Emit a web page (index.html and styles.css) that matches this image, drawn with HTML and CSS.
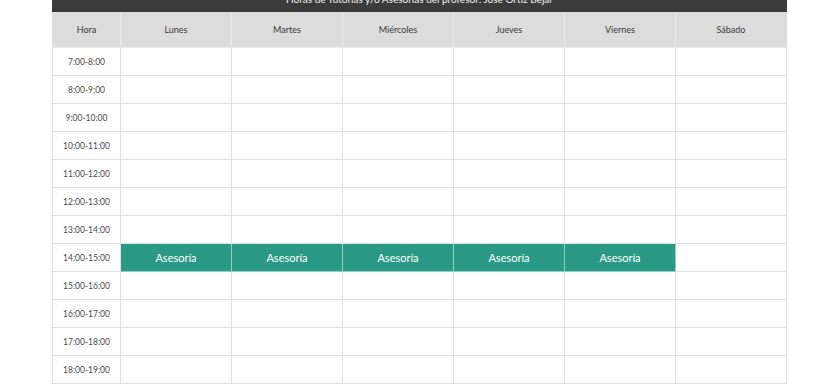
FILE: index.html
```html
<!DOCTYPE html>
<html lang="es">
<head>
<meta charset="utf-8">
<title>Horario</title>
<link rel="stylesheet" href="styles.css">
</head>
<body>
<div class="schedule">
  <div class="title">Horas de Tutorías y/o Asesorías del profesor: José Ortiz Bejar</div>
  <div class="grid">
    <div class="cell head">Hora</div>
    <div class="cell head">Lunes</div>
    <div class="cell head">Martes</div>
    <div class="cell head">Miércoles</div>
    <div class="cell head">Jueves</div>
    <div class="cell head">Viernes</div>
    <div class="cell head">Sábado</div>

    <div class="cell time">7:00-8:00</div><div class="cell"></div><div class="cell"></div><div class="cell"></div><div class="cell"></div><div class="cell"></div><div class="cell"></div>
    <div class="cell time">8:00-9:00</div><div class="cell"></div><div class="cell"></div><div class="cell"></div><div class="cell"></div><div class="cell"></div><div class="cell"></div>
    <div class="cell time">9:00-10:00</div><div class="cell"></div><div class="cell"></div><div class="cell"></div><div class="cell"></div><div class="cell"></div><div class="cell"></div>
    <div class="cell time">10:00-11:00</div><div class="cell"></div><div class="cell"></div><div class="cell"></div><div class="cell"></div><div class="cell"></div><div class="cell"></div>
    <div class="cell time">11:00-12:00</div><div class="cell"></div><div class="cell"></div><div class="cell"></div><div class="cell"></div><div class="cell"></div><div class="cell"></div>
    <div class="cell time">12:00-13:00</div><div class="cell"></div><div class="cell"></div><div class="cell"></div><div class="cell"></div><div class="cell"></div><div class="cell"></div>
    <div class="cell time">13:00-14:00</div><div class="cell"></div><div class="cell"></div><div class="cell"></div><div class="cell"></div><div class="cell"></div><div class="cell"></div>
    <div class="cell time">14:00-15:00</div><div class="cell busy">Asesoría</div><div class="cell busy">Asesoría</div><div class="cell busy">Asesoría</div><div class="cell busy">Asesoría</div><div class="cell busy">Asesoría</div><div class="cell"></div>
    <div class="cell time">15:00-16:00</div><div class="cell"></div><div class="cell"></div><div class="cell"></div><div class="cell"></div><div class="cell"></div><div class="cell"></div>
    <div class="cell time">16:00-17:00</div><div class="cell"></div><div class="cell"></div><div class="cell"></div><div class="cell"></div><div class="cell"></div><div class="cell"></div>
    <div class="cell time">17:00-18:00</div><div class="cell"></div><div class="cell"></div><div class="cell"></div><div class="cell"></div><div class="cell"></div><div class="cell"></div>
    <div class="cell time">18:00-19:00</div><div class="cell"></div><div class="cell"></div><div class="cell"></div><div class="cell"></div><div class="cell"></div><div class="cell"></div>
  </div>
</div>
</body>
</html>
```
FILE: styles.css
```css
html, body {
  margin: 0;
  padding: 0;
  background: #ffffff;
}
body {
  font-family: Lato, "Noto Sans", sans-serif;
  overflow: hidden;
  height: 385px;
}
.schedule {
  width: 735px;
  margin-left: 52px;
}
.title {
  background: #3b3b3b;
  color: #f2f2f2;
  font-size: 10px;
  line-height: 14px;
  margin-top: -14px;
  padding-top: 6px;
  text-align: center;
  box-sizing: border-box;
  height: 26px;
}
.grid {
  display: grid;
  grid-template-columns: 68px repeat(5, 111px) 1fr;
  grid-template-rows: 36px;
  grid-auto-rows: 28px;
  border-left: 1px solid #e0e0e0;
  border-right: 1px solid #e0e0e0;
}
.cell {
  border-right: 1px solid #e0e0e0;
  border-bottom: 1px solid #e0e0e0;
  display: flex;
  align-items: center;
  justify-content: center;
  font-size: 8.5px;
  color: #4a4a4a;
}
.cell:nth-child(7n) {
  border-right: none;
}
.head {
  background: #dcdcdc;
  color: #3a3a3a;
  font-size: 9px;
  border-right-color: #e9e9e9;
  border-bottom-color: #e9e9e9;
}
.busy {
  background: #2a9a87;
  color: #ffffff;
  font-size: 11px;
  border-right-color: #8fd0c4;
  border-bottom-color: #8fd0c4;
}
```
